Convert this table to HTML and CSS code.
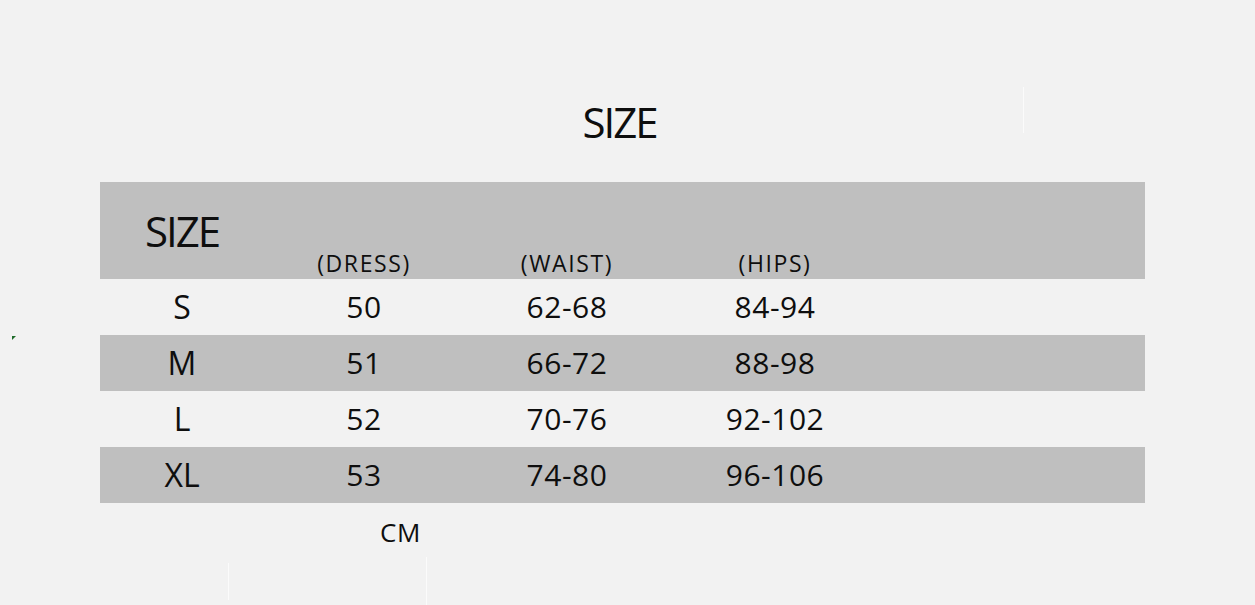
FILE: index.html
```html
<!DOCTYPE html>
<html lang="en">
<head>
<meta charset="utf-8">
<title>SIZE</title>
<link rel="stylesheet" href="styles.css">
</head>
<body>
<main class="page">
  <h1 class="title">SIZE</h1>
  <div class="chart">
    <div class="row head">
      <div class="cell size-h">SIZE</div>
      <div class="cell sub">(DRESS)</div>
      <div class="cell sub">(WAIST)</div>
      <div class="cell sub">(HIPS)</div>
      <div class="cell"></div>
    </div>
    <div class="row">
      <div class="cell sz">S</div>
      <div class="cell">50</div>
      <div class="cell">62-68</div>
      <div class="cell">84-94</div>
      <div class="cell"></div>
    </div>
    <div class="row shade">
      <div class="cell sz">M</div>
      <div class="cell">51</div>
      <div class="cell">66-72</div>
      <div class="cell">88-98</div>
      <div class="cell"></div>
    </div>
    <div class="row">
      <div class="cell sz">L</div>
      <div class="cell">52</div>
      <div class="cell">70-76</div>
      <div class="cell">92-102</div>
      <div class="cell"></div>
    </div>
    <div class="row shade">
      <div class="cell sz">XL</div>
      <div class="cell">53</div>
      <div class="cell">74-80</div>
      <div class="cell">96-106</div>
      <div class="cell"></div>
    </div>
  </div>
  <div class="unit">CM</div>

  <span class="mark line-a"></span>
  <span class="mark line-b"></span>
  <span class="mark line-c"></span>
  <span class="mark tick"></span>
</main>
</body>
</html>
```

FILE: styles.css
```css
html, body {
  margin: 0;
  padding: 0;
  background: #f2f2f2;
}

body {
  font-family: "Open Sans", "Noto Sans", "Liberation Sans", sans-serif;
  color: #0e0e0e;
  width: 1255px;
  height: 605px;
  overflow: hidden;
}

.page {
  position: relative;
  width: 1255px;
  height: 605px;
  overflow: hidden;
}

.title {
  margin: 101px 0 0 97px;
  width: 1045px;
  text-align: center;
  font-size: 42px;
  line-height: 42px;
  font-weight: 400;
  letter-spacing: -2px;
}

.chart {
  margin: 39px 0 0 100px;
  width: 1045px;
  display: flex;
  flex-direction: column;
}

.row {
  display: grid;
  grid-template-columns: 164px 200px 206px 210px 1fr;
  height: 56px;
  align-items: center;
}

.row.head {
  height: 97px;
  background: #bfbfbf;
}

.row.shade {
  background: #bfbfbf;
}

.cell {
  text-align: center;
  font-size: 30px;
  line-height: 30px;
  letter-spacing: 0.5px;
}

.cell.sz {
  font-size: 32px;
  line-height: 32px;
  letter-spacing: 0;
}

.cell.size-h {
  font-size: 42px;
  line-height: 42px;
  letter-spacing: -2px;
  align-self: center;
}

.cell.sub {
  align-self: end;
  font-size: 23px;
  line-height: 23px;
  letter-spacing: 1.6px;
  padding-bottom: 4px;
}

.unit {
  margin-top: 16px;
  padding-left: 380px;
  font-size: 26px;
  line-height: 26px;
  letter-spacing: 0.5px;
}

.mark {
  position: absolute;
  display: block;
  background: #fbfbfb;
  width: 1px;
}

.line-a {
  left: 1023px;
  top: 87px;
  height: 46px;
}

.line-b {
  left: 228px;
  top: 563px;
  height: 37px;
}

.line-c {
  left: 426px;
  top: 557px;
  height: 48px;
}

.tick {
  left: 12px;
  top: 336px;
  width: 0;
  height: 0;
  background: none;
  border-top: 4px solid #1f6b2a;
  border-right: 4px solid transparent;
}
```
